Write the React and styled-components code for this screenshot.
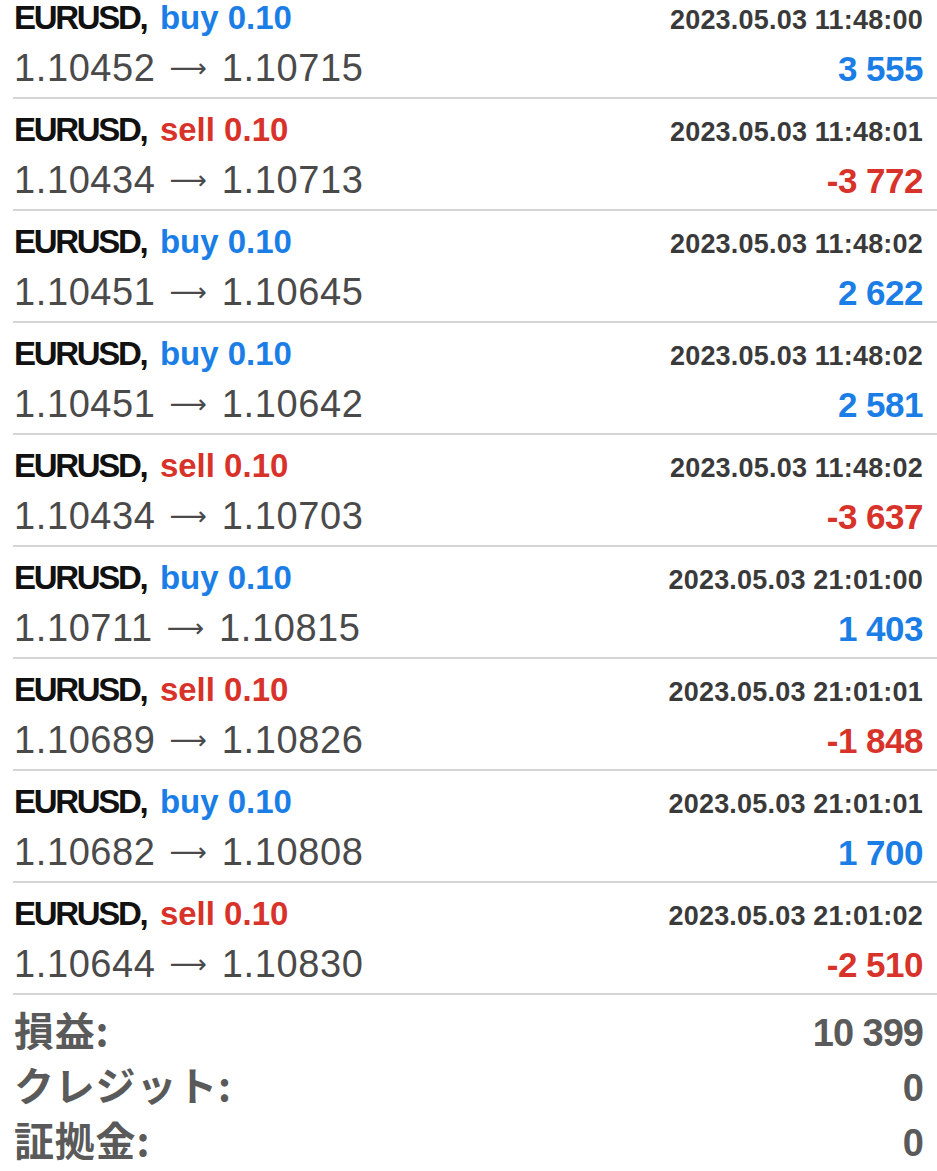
import React from 'react';
import styled, { createGlobalStyle } from 'styled-components';

const GlobalStyle = createGlobalStyle`
  html, body {
    margin: 0;
    padding: 0;
    background: #ffffff;
  }
  body {
    font-family: 'Liberation Sans', Arial, sans-serif;
    overflow: hidden;
  }
`;

const blue = '#1a7ee6';
const red = '#d8332a';

const Page = styled.div`
  width: 937px;
  height: 1171px;
  overflow: hidden;
  background: #fff;
`;

const List = styled.div`
  margin-top: -13px;
`;

const Row = styled.div`
  margin-left: 13px;
  padding: 6px 14px 2px 1px;
  border-bottom: 2px solid #d4d4d4;
`;

const Line = styled.div`
  display: flex;
  justify-content: space-between;
  align-items: baseline;
  height: ${(p) => p.h}px;
  line-height: ${(p) => p.h}px;
  white-space: nowrap;
`;

const Title = styled.span`
  font-size: 33px;
  font-weight: 700;
  color: #111;
`;

const Symbol = styled.span`
  letter-spacing: -2.3px;
`;

const Side = styled.span`
  color: ${(p) => (p.type === 'buy' ? blue : red)};
  margin-left: 2px;
`;

const Price = styled.span`
  font-size: 38px;
  color: #4a4a4a;
  letter-spacing: 0.6px;
`;

const Arrow = styled.span`
  font-family: 'DejaVu Sans', sans-serif;
  font-size: 26px;
  color: #4a4a4a;
  letter-spacing: 0;
  margin: 0 15px 0 14px;
  position: relative;
  top: -4px;
`;

const Time = styled.span`
  font-size: 27px;
  font-weight: 700;
  color: #3a3a3a;
  letter-spacing: 0.2px;
`;

const Amount = styled.span`
  font-size: 35px;
  font-weight: 700;
  color: ${(p) => (p.neg ? red : blue)};
  letter-spacing: -0.5px;
`;

const Summary = styled.div`
  padding: 11px 14px 0 14px;
`;

const SumRow = styled.div`
  display: flex;
  justify-content: space-between;
  align-items: baseline;
  height: 55px;
  line-height: 55px;
`;

const SumLabel = styled.span`
  font-family: 'Noto Sans CJK JP', 'Liberation Sans', sans-serif;
  font-size: 40px;
  font-weight: 700;
  line-height: 1;
  color: #5a5a5a;
  letter-spacing: 0.8px;
`;

const SumValue = styled.span`
  font-size: 38px;
  font-weight: 700;
  color: #5a5a5a;
  letter-spacing: -1px;
`;

const deals = [
  { type: 'buy', open: '1.10452', close: '1.10715', time: '2023.05.03 11:48:00', profit: '3 555' },
  { type: 'sell', open: '1.10434', close: '1.10713', time: '2023.05.03 11:48:01', profit: '-3 772' },
  { type: 'buy', open: '1.10451', close: '1.10645', time: '2023.05.03 11:48:02', profit: '2 622' },
  { type: 'buy', open: '1.10451', close: '1.10642', time: '2023.05.03 11:48:02', profit: '2 581' },
  { type: 'sell', open: '1.10434', close: '1.10703', time: '2023.05.03 11:48:02', profit: '-3 637' },
  { type: 'buy', open: '1.10711', close: '1.10815', time: '2023.05.03 21:01:00', profit: '1 403' },
  { type: 'sell', open: '1.10689', close: '1.10826', time: '2023.05.03 21:01:01', profit: '-1 848' },
  { type: 'buy', open: '1.10682', close: '1.10808', time: '2023.05.03 21:01:01', profit: '1 700' },
  { type: 'sell', open: '1.10644', close: '1.10830', time: '2023.05.03 21:01:02', profit: '-2 510' },
];

const totals = [
  { label: '損益:', value: '10 399' },
  { label: 'クレジット:', value: '0' },
  { label: '証拠金:', value: '0' },
];

export default function App() {
  return (
    <Page>
      <GlobalStyle />
      <List>
        {deals.map((d, i) => (
          <Row key={i}>
            <Line h={49}>
              <Title>
                <Symbol>EURUSD</Symbol>,{' '}
                <Side type={d.type}>{d.type} 0.10</Side>
              </Title>
              <Time>{d.time}</Time>
            </Line>
            <Line h={53}>
              <Price>
                {d.open}
                <Arrow>⟶</Arrow>
                {d.close}
              </Price>
              <Amount neg={d.type === 'sell'}>{d.profit}</Amount>
            </Line>
          </Row>
        ))}
      </List>
      <Summary>
        {totals.map((t) => (
          <SumRow key={t.label}>
            <SumLabel>{t.label}</SumLabel>
            <SumValue>{t.value}</SumValue>
          </SumRow>
        ))}
      </Summary>
    </Page>
  );
}
